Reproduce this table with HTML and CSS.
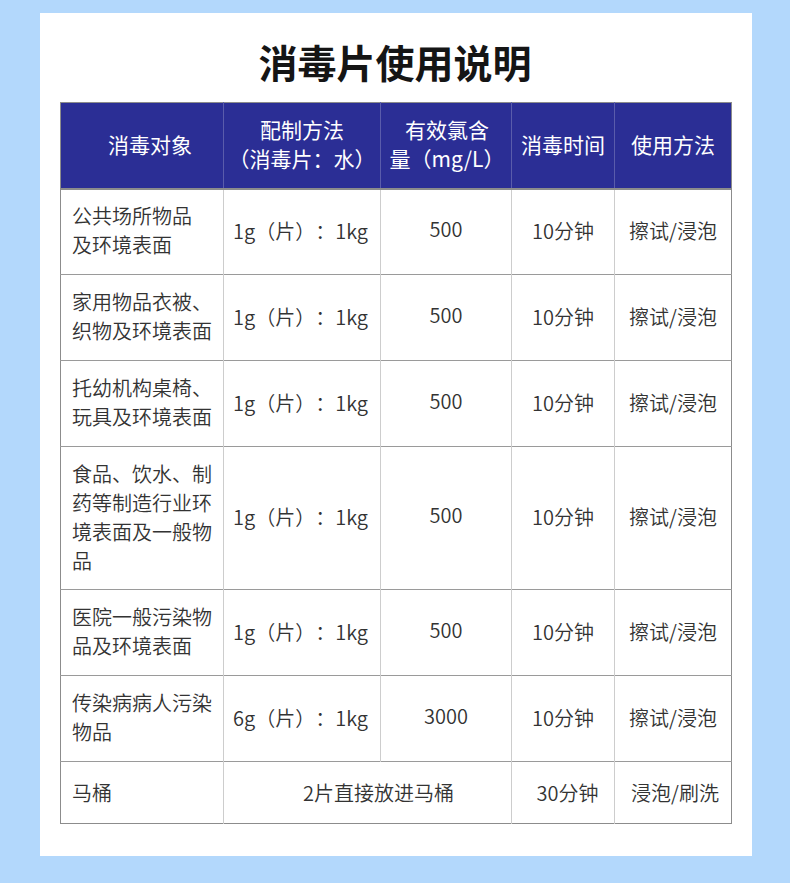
FILE: index.html
```html
<!DOCTYPE html>
<html lang="zh">
<head>
<meta charset="utf-8">
<link rel="stylesheet" href="styles.css">
</head>
<body>
<div class="card">
  <h1 class="title">消毒片使用说明</h1>
  <table class="tbl">
    <colgroup>
      <col class="c1"><col class="c2"><col class="c3"><col class="c4"><col class="c5">
    </colgroup>
    <thead>
      <tr class="head">
        <th class="h1">消毒对象</th>
        <th>配制方法<br>（消毒片：水）</th>
        <th class="h3">有效氯含<br>量（mg/L）</th>
        <th>消毒时间</th>
        <th>使用方法</th>
      </tr>
    </thead>
    <tbody>
      <tr class="r2">
        <td class="obj">公共场所物品<br>及环境表面</td>
        <td class="mix">1g（片）：1kg</td>
        <td class="num">500</td>
        <td>10分钟</td>
        <td>擦试/浸泡</td>
      </tr>
      <tr class="r2">
        <td class="obj">家用物品衣被、<br>织物及环境表面</td>
        <td class="mix">1g（片）：1kg</td>
        <td class="num">500</td>
        <td>10分钟</td>
        <td>擦试/浸泡</td>
      </tr>
      <tr class="r2">
        <td class="obj">托幼机构桌椅、<br>玩具及环境表面</td>
        <td class="mix">1g（片）：1kg</td>
        <td class="num">500</td>
        <td>10分钟</td>
        <td>擦试/浸泡</td>
      </tr>
      <tr class="r4">
        <td class="obj">食品、饮水、制<br>药等制造行业环<br>境表面及一般物<br>品</td>
        <td class="mix">1g（片）：1kg</td>
        <td class="num">500</td>
        <td>10分钟</td>
        <td>擦试/浸泡</td>
      </tr>
      <tr class="r2">
        <td class="obj">医院一般污染物<br>品及环境表面</td>
        <td class="mix">1g（片）：1kg</td>
        <td class="num">500</td>
        <td>10分钟</td>
        <td>擦试/浸泡</td>
      </tr>
      <tr class="r2">
        <td class="obj">传染病病人污染<br>物品</td>
        <td class="mix">6g（片）：1kg</td>
        <td class="num">3000</td>
        <td>10分钟</td>
        <td>擦试/浸泡</td>
      </tr>
      <tr class="r1">
        <td class="obj">马桶</td>
        <td colspan="2" class="shift-l">2片直接放进马桶</td>
        <td class="shift-s">30分钟</td>
        <td class="shift-t">浸泡/刷洗</td>
      </tr>
    </tbody>
  </table>
</div>
</body>
</html>
```

FILE: styles.css
```css
html, body {
  margin: 0;
  padding: 0;
}
body {
  background: #b3d8fc;
  font-family: "Noto Sans CJK SC", "Noto Sans", sans-serif;
  width: 790px;
  height: 883px;
  overflow: hidden;
  text-spacing-trim: space-all;
}
.card {
  background: #ffffff;
  margin: 13px 0 0 40px;
  width: 712px;
  height: 843px;
  padding: 23px 0 0 20px;
  box-sizing: border-box;
}
.title {
  margin: 0 0 16px 0;
  width: 670px;
  text-align: center;
  font-size: 39px;
  line-height: 50px;
  font-weight: 700;
  color: #151515;
}
.tbl {
  width: 671px;
  border-collapse: collapse;
  table-layout: fixed;
  border: 1px solid #8c8c8c;
}
.c1 { width: 163px; }
.c2 { width: 157px; }
.c3 { width: 131px; }
.c4 { width: 103px; }
.c5 { width: 117px; }
.head {
  height: 86px;
  background: #2b2e95;
}
.head th {
  color: #ffffff;
  font-weight: 400;
  font-size: 21px;
  line-height: 29px;
  text-align: center;
  padding: 0 0 2px 0;
  border-left: 1px solid #5a5cab;
  border-bottom: 2px solid #8c8c8c;
}
.head th:first-child { border-left: none; }
.head .h1 { padding-left: 16px; }
.head .h3 { padding-left: 2px; }
td {
  font-size: 20px;
  line-height: 29px;
  color: #333333;
  text-align: center;
  vertical-align: middle;
  padding: 0 0 3px 0;
  border-top: 1px solid #9a9a9a;
  border-left: 1px solid #cdcdcd;
  font-weight: 350;
}
td:first-child { border-left: none; }
td.obj {
  text-align: left;
  padding-left: 11px;
}
td.mix { padding-right: 3px; }
td.num { padding-bottom: 7px; }
.r2 { height: 86px; }
.r4 { height: 143px; }
.r1 { height: 62px; }
.r1 td { padding-bottom: 0; }
.shift-l { padding-left: 22px; }
.shift-s { padding-left: 9px; }
.shift-t { padding-left: 4px; }
```
